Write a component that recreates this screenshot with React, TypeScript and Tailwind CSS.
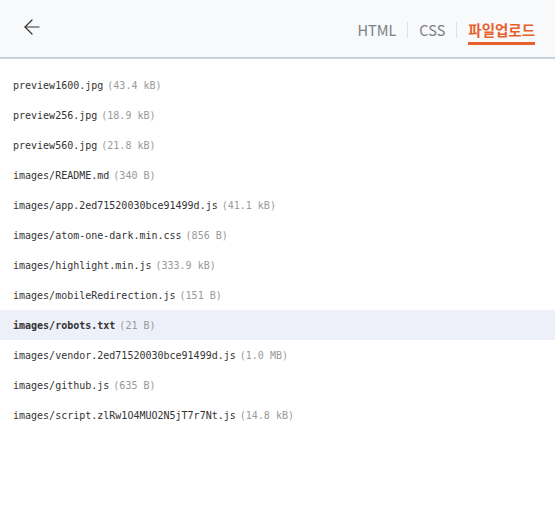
import { ArrowLeft } from 'lucide-react'

const files = [
  { name: 'preview1600.jpg', size: '43.4 kB' },
  { name: 'preview256.jpg', size: '18.9 kB' },
  { name: 'preview560.jpg', size: '21.8 kB' },
  { name: 'images/README.md', size: '340 B' },
  { name: 'images/app.2ed71520030bce91499d.js', size: '41.1 kB' },
  { name: 'images/atom-one-dark.min.css', size: '856 B' },
  { name: 'images/highlight.min.js', size: '333.9 kB' },
  { name: 'images/mobileRedirection.js', size: '151 B' },
  { name: 'images/robots.txt', size: '21 B', active: true },
  { name: 'images/vendor.2ed71520030bce91499d.js', size: '1.0 MB' },
  { name: 'images/github.js', size: '635 B' },
  { name: 'images/script.zlRw1O4MUO2N5jT7r7Nt.js', size: '14.8 kB' },
]

export default function App() {
  return (
    <div className="w-[555px] h-[520px] bg-white font-['Noto_Sans_CJK_KR','Noto_Sans',sans-serif]">
      {/* Header */}
      <div className="h-[59px] bg-[#f8f9fb] border-b-2 border-[#c9d1db] flex items-center justify-between pl-[20px] pr-[20px]">
        <button className="text-[#333] -mt-[3px]">
          <ArrowLeft size={24} strokeWidth={1.2} />
        </button>
        <nav className="flex items-center text-[14.5px] leading-[20px] mt-[2px]">
          <span className="text-[#7b7f86]">HTML</span>
          <span className="mx-[11px] w-px h-[16px] bg-[#dde1e6]" />
          <span className="text-[#7b7f86]">CSS</span>
          <span className="mx-[11px] w-px h-[16px] bg-[#dde1e6]" />
          <span className="relative text-[#e8602c] font-semibold">
            파일업로드
            <span className="absolute left-0 right-0 -bottom-[5px] h-[3px] bg-[#e8602c]" />
          </span>
        </nav>
      </div>

      {/* File list */}
      <ul className="mt-[11px] font-['DejaVu_Sans_Mono',monospace] text-[10px]">
        {files.map(f => (
          <li
            key={f.name}
            className={`h-[30px] flex items-center px-[13px] ${f.active ? 'bg-[#edf0f8] font-bold' : ''}`}
          >
            <span className="text-[#333]">{f.name}</span>
            <span className="ml-[4px] text-[#999] font-normal">({f.size})</span>
          </li>
        ))}
      </ul>
    </div>
  )
}
